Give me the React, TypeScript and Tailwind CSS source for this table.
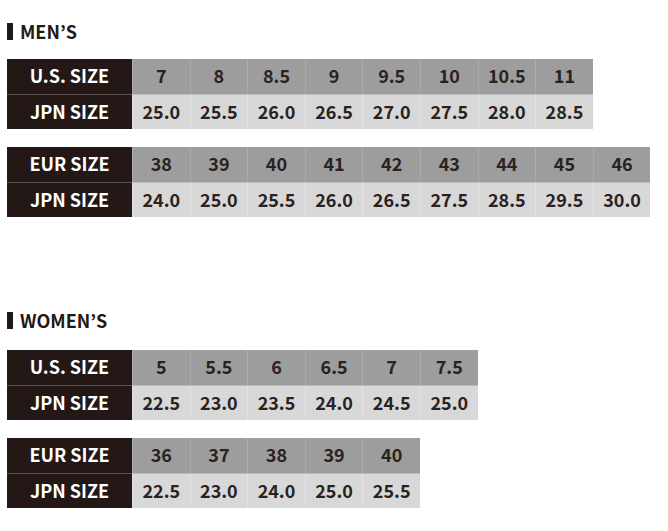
import React from "react";

const FONT = { fontFamily: '"Noto Sans CJK JP", "Noto Sans", sans-serif' };

function Heading({ text }: { text: string }) {
  return (
    <div className="flex items-center h-[17px]">
      <div className="w-[6px] h-[17px] bg-[#231815]" />
      <div className="ml-[7px] text-[18px] leading-none font-semibold text-[#231815] pb-[1px]">
        {text}
      </div>
    </div>
  );
}

function SizeTable({
  labelTop,
  labelBottom,
  top,
  bottom,
}: {
  labelTop: string;
  labelBottom: string;
  top: string[];
  bottom: string[];
}) {
  return (
    <div className="flex">
      <div className="w-[125px] flex flex-col bg-[#231815] text-white font-bold text-[18px] leading-none">
        <div className="h-[36px] flex items-center justify-center border-b border-[#5e5553] pb-[3px]">
          {labelTop}
        </div>
        <div className="h-[34px] flex items-center justify-center pb-[2px]">{labelBottom}</div>
      </div>
      <div className="flex flex-col text-[18px] leading-none font-semibold text-[#2a2220]">
        <div className="flex h-[36px] bg-[#9d9d9d]">
          {top.map((v, i) => (
            <div
              key={i}
              className="w-[57.6px] flex items-center justify-center border-l border-[#acacac] border-b border-b-[#bdbdbd] pb-[3px]"
            >
              {v}
            </div>
          ))}
        </div>
        <div className="flex h-[34px] bg-[#d8d8d8]">
          {bottom.map((v, i) => (
            <div
              key={i}
              className="w-[57.6px] flex items-center justify-center border-l border-[#e2e2e2] pb-[2px]"
            >
              {v}
            </div>
          ))}
        </div>
      </div>
    </div>
  );
}

export default function App() {
  return (
    <div className="w-[668px] h-[531px] bg-white pl-[7px] pt-[23px]" style={FONT}>
      <Heading text="MEN’S" />
      <div className="mt-[19px]">
        <SizeTable
          labelTop="U.S. SIZE"
          labelBottom="JPN SIZE"
          top={["7", "8", "8.5", "9", "9.5", "10", "10.5", "11"]}
          bottom={["25.0", "25.5", "26.0", "26.5", "27.0", "27.5", "28.0", "28.5"]}
        />
      </div>
      <div className="mt-[18px]">
        <SizeTable
          labelTop="EUR SIZE"
          labelBottom="JPN SIZE"
          top={["38", "39", "40", "41", "42", "43", "44", "45", "46"]}
          bottom={["24.0", "25.0", "25.5", "26.0", "26.5", "27.5", "28.5", "29.5", "30.0"]}
        />
      </div>
      <div className="mt-[95px]">
        <Heading text="WOMEN’S" />
      </div>
      <div className="mt-[21px]">
        <SizeTable
          labelTop="U.S. SIZE"
          labelBottom="JPN SIZE"
          top={["5", "5.5", "6", "6.5", "7", "7.5"]}
          bottom={["22.5", "23.0", "23.5", "24.0", "24.5", "25.0"]}
        />
      </div>
      <div className="mt-[18px]">
        <SizeTable
          labelTop="EUR SIZE"
          labelBottom="JPN SIZE"
          top={["36", "37", "38", "39", "40"]}
          bottom={["22.5", "23.0", "24.0", "25.0", "25.5"]}
        />
      </div>
    </div>
  );
}
